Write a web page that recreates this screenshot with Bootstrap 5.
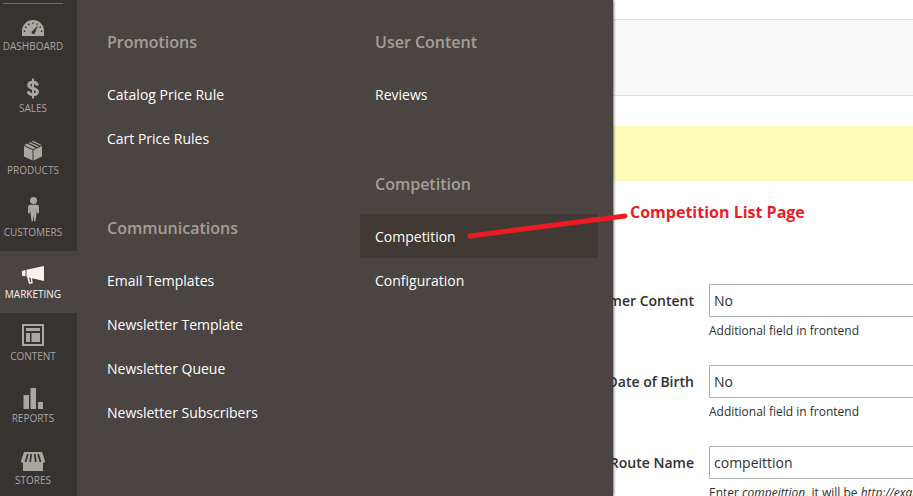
<!DOCTYPE html>
<html lang="en">
<head>
<meta charset="utf-8">
<meta name="viewport" content="width=device-width, initial-scale=1">
<title>Competition configuration</title>
<link href="https://cdn.jsdelivr.net/npm/bootstrap@5.3.0/dist/css/bootstrap.min.css" rel="stylesheet">
<style>
body { font-family: "Open Sans", "Noto Sans", sans-serif; font-size: 14px; line-height: 20px; color: #303030; background: #fff; }
.side-menu { width: 77px; background: #373330; z-index: 3; }
.side-rule { width: 60px; height: 4px; margin: 0 0 -1px 3px; border-bottom: 1px solid #736963; }
.side-link { height: 62px; padding: 14px 11px 0 0; font-size: 10px; line-height: 14px; color: #aaa6a0; text-decoration: none; text-transform: uppercase; }
.side-link svg { width: 26px; height: 22px; fill: currentColor; overflow: visible; }
.side-link:hover { color: #f7f3eb; }
.side-link.current { background: #4a4542; color: #f7f3eb; }
.sub-menu { width: 536px; padding: 31px 15px 0; column-gap: 30px; background: #4a4542; box-shadow: 0 0 3px #000; z-index: 2; }
.menu-col { row-gap: 57px; }
.menu-title { margin: 0 15px 19px; font-size: 16px; line-height: 22px; font-weight: 600; color: #a79d95; }
.menu-link { padding: 13px 15px 11px; color: #fff; text-decoration: none; }
.menu-link:hover, .menu-link.current { background: #403934; color: #fff; }
.page-bar { height: 77px; margin-top: 19px; background: #f8f8f8; border: solid #e0e0e0; border-width: 1px 0; }
.notice { height: 55px; margin-top: 30px; background: #fffbbb; }
.callout-text { margin: 20px 0 0 17px; font-size: 16px; line-height: 22px; font-weight: 700; color: #ed1c24; }
.settings { margin-top: 61px; }
.field { height: 81px; column-gap: 15px; }
.field-label { width: 81px; line-height: 33px; font-weight: 600; }
.field-body { width: 400px; }
.field-input { width: 100%; height: 33px; padding: 0 4px; border: 1px solid #adadad; border-radius: 1px; background: #fff; color: #303030; appearance: none; }
.hint { margin-top: 5px; font-size: 12px; line-height: 18px; }
.pointer-line { left: 0; top: 0; width: 640px; height: 260px; z-index: 4; pointer-events: none; }
</style>
<script src="https://cdn.jsdelivr.net/npm/bootstrap@5.3.0/dist/js/bootstrap.bundle.min.js"></script>
</head>
<body>
<div class="d-flex vh-100 overflow-hidden position-relative">
  <nav class="side-menu flex-shrink-0 position-relative" aria-label="Main">
    <div class="side-rule"></div>
    <a class="side-link d-flex flex-column align-items-center" href="#">
      <svg viewBox="0 0 26 22" aria-hidden="true"><path transform="translate(0 1)" fill-rule="evenodd" d="M2 18v-5a11 11 0 0 1 22 0v5zM12.2 15.800a1.700 1.700 0 0 0 2.700-.8L18 7.200l-5.200 5.600a2 2 0 0 0-.6 3zM3.800 12.500v1.400h1.500v-1.400zM5 8.600v1.400h1.500V8.600zM8 5.800v1.400h1.500V5.800zM12.200 4.400v1.400h1.500V4.400zM16.400 5.400v1.300h1.500V5.400zM19.400 8.600v1.400h1.500V8.600zM20.800 12.500v1.400h1.500v-1.400z"/></svg>
      <span>Dashboard</span></a>
    <a class="side-link d-flex flex-column align-items-center" href="#">
      <svg viewBox="0 0 26 22" aria-hidden="true"><g transform="translate(0 -1.500)"><path fill="none" stroke="currentColor" stroke-width="3" d="M17.400 8C17 5.900 15.400 4.800 13 4.800S8.800 5.900 8.800 7.700C8.800 9.800 10.500 10.300 13 10.900S17.400 12.200 17.400 14.300 15.800 17.200 13 17.200 8.600 16 8.200 13.800"/><path d="M12 1h2v20h-2z"/></g></svg>
      <span>Sales</span></a>
    <a class="side-link d-flex flex-column align-items-center" href="#">
      <svg viewBox="0 0 26 22" aria-hidden="true"><path transform="translate(0 -3)" d="M4 8l8.500 3.900V22.500L4 18.500zM13.500 11.900L22 8V18.500l-8.500 4zM4.300 6.900l2.800-1.300 8.700 4.300-2.800 1.300zM8.700 4.900l1.500-.7 8.800 4.300-1.500.7zM11.500 3.500L13 2.700l8.700 4.200-1.400.7z"/></svg>
      <span>Products</span></a>
    <a class="side-link d-flex flex-column align-items-center" href="#">
      <svg viewBox="0 0 26 22" aria-hidden="true"><g transform="translate(0 -6)"><circle cx="13.500" cy="3.500" r="3.500"/><path d="M10.500 7.700h6q2.500 0 2.500 2.500v5.600q0 .8-1.600.8l-.8-3-.2 4-1 6.600h-1.300L13.500 18l-.6 6.200h-1.300l-1-6.600-.2-4-.8 3q-1.600 0-1.600-.8v-5.600q0-2.500 2.500-2.500z"/></g></svg>
      <span>Customers</span></a>
    <a class="side-link current d-flex flex-column align-items-center" href="#" aria-current="page">
      <svg viewBox="0 0 26 22" aria-hidden="true"><path transform="translate(0 -1)" fill-rule="evenodd" d="M2 7l3.500-1v6.200L2 11.700zM6.500 5.700L24 2v15L12 14.200l.8 5-3.800.9-2-7.500-.5-.1zM9 13.600l1.200 4.600 1-.3-.5-4z"/></svg>
      <span>Marketing</span></a>
    <a class="side-link d-flex flex-column align-items-center" href="#">
      <svg viewBox="0 0 26 22" aria-hidden="true"><path transform="translate(0 -3)" fill-rule="evenodd" d="M2 0h22v22H2zM4 2v18h18V2zM6 4h14v3H6zM6 9h4v9H6zM11.500 9H20v9h-8.500z"/></svg>
      <span>Content</span></a>
    <a class="side-link d-flex flex-column align-items-center" href="#">
      <svg viewBox="0 0 26 22" aria-hidden="true"><path transform="translate(0 -2)" d="M3.500 8H9v14H3.500zM10.500 1H16v21h-5.500zM18 15h5v7h-5z"/></svg>
      <span>Reports</span></a>
    <a class="side-link d-flex flex-column align-items-center" href="#">
      <svg viewBox="0 0 26 22" aria-hidden="true"><path d="M4 1h18l3 9q-.4 2-2 2v8H3v-8Q1.400 12 1 10z"/><path fill="none" stroke="#373330" stroke-width="1.800" d="M7.800 3L5.500 11M11.200 3l-1 8M14.800 3l1 8M18.200 3l2.300 8"/></svg>
      <span>Stores</span></a>
  </nav>

  <nav class="sub-menu d-flex flex-shrink-0 position-relative" aria-label="Marketing">
    <div class="menu-col d-flex flex-column flex-fill w-50">
      <section>
        <h2 class="menu-title">Promotions</h2>
        <a class="menu-link d-block" href="#">Catalog Price Rule</a>
        <a class="menu-link d-block" href="#">Cart Price Rules</a>
      </section>
      <section>
        <h2 class="menu-title">Communications</h2>
        <a class="menu-link d-block" href="#">Email Templates</a>
        <a class="menu-link d-block" href="#">Newsletter Template</a>
        <a class="menu-link d-block" href="#">Newsletter Queue</a>
        <a class="menu-link d-block" href="#">Newsletter Subscribers</a>
      </section>
    </div>
    <div class="menu-col d-flex flex-column flex-fill w-50">
      <section>
        <h2 class="menu-title">User Content</h2>
        <a class="menu-link d-block" href="#">Reviews</a>
      </section>
      <section>
        <h2 class="menu-title">Competition</h2>
        <a class="menu-link current d-block" href="#">Competition</a>
        <a class="menu-link d-block" href="#">Configuration</a>
      </section>
    </div>
  </nav>

  <main class="flex-fill overflow-hidden">
    <div class="page-bar"></div>
    <div class="notice"></div>
    <p class="callout-text text-nowrap">Competition List Page</p>
    <form class="settings">
      <div class="field d-flex">
        <label class="field-label d-flex justify-content-end flex-shrink-0 text-nowrap" for="content">Customer Content</label>
        <div class="field-body flex-shrink-0">
          <select class="field-input d-block" id="content"><option>No</option><option>Yes</option></select>
          <div class="hint">Additional field in frontend</div>
        </div>
      </div>
      <div class="field d-flex">
        <label class="field-label d-flex justify-content-end flex-shrink-0 text-nowrap" for="birth">Date of Birth</label>
        <div class="field-body flex-shrink-0">
          <select class="field-input d-block" id="birth"><option>No</option><option>Yes</option></select>
          <div class="hint">Additional field in frontend</div>
        </div>
      </div>
      <div class="field d-flex">
        <label class="field-label d-flex justify-content-end flex-shrink-0 text-nowrap" for="route">Route Name</label>
        <div class="field-body flex-shrink-0">
          <input class="field-input d-block" id="route" type="text" value="compeittion">
          <div class="hint">Enter <em>compeittion</em>, it will be <em>http://example.com/</em></div>
        </div>
      </div>
    </form>
  </main>

  <svg class="pointer-line position-absolute" viewBox="0 0 640 260" aria-hidden="true"><path d="M470 236L625 216" fill="none" stroke="#ed1c24" stroke-width="5" stroke-linecap="round"/></svg>
</div>
</body>
</html>
